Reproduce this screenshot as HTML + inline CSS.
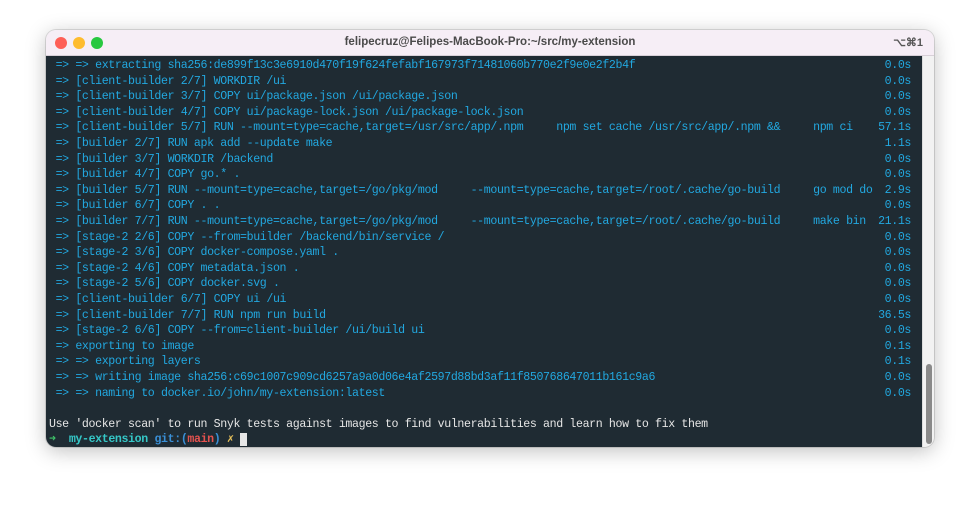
<!DOCTYPE html>
<html><head><meta charset="utf-8"><style>
body{margin:0;width:980px;height:509px;background:#fff;overflow:hidden;position:relative;font-family:"Liberation Sans",sans-serif}
.win{position:absolute;left:46px;top:30px;width:888px;height:417px;border-radius:10px;overflow:hidden;box-shadow:0 4px 20px rgba(0,0,0,.25),0 0 0 1px rgba(0,0,0,.12);background:#f3f3f3}
.tb{height:25px;background:#f6eef6;border-bottom:1px solid #d8d0d8;position:relative}
.d{position:absolute;top:7px;width:12px;height:12px;border-radius:50%}
.title{position:absolute;left:0;right:0;top:6px;text-align:center;font-size:11.5px;font-weight:bold;color:#4a4a4a}
.kb{position:absolute;right:11px;top:6px;font-size:11px;font-weight:bold;color:#555}
.term{position:absolute;left:0;top:26px;width:876px;height:391px;background:#1f2b33;font-family:"Liberation Mono",monospace;font-size:11.6px;letter-spacing:-0.37px;color:#22a8e0;white-space:pre}
.l{position:absolute;left:3px;height:15.6px;line-height:15.6px;width:862px;margin-top:2px}
.t{position:absolute;right:0;top:0}
.sb{position:absolute;left:876px;top:26px;width:12px;height:391px;background:#f2f2f2;border-left:1px solid #ddd}
.th{position:absolute;left:3px;top:308px;width:6px;height:80px;border-radius:3px;background:#8a8a8a}
</style></head><body>
<div class="win">
<div class="tb">
<div class="d" style="left:9px;background:#fe5f57"></div>
<div class="d" style="left:27px;background:#febc2e"></div>
<div class="d" style="left:45px;background:#28c840"></div>
<div class="title">felipecruz@Felipes-MacBook-Pro:~/src/my-extension</div>
<div class="kb">⌥⌘1</div>
</div>
<div class="term">
<div class="l" style="top:0px"> =&gt; =&gt; extracting sha256:de899f13c3e6910d470f19f624fefabf167973f71481060b770e2f9e0e2f2b4f<span class="t">0.0s</span></div>
<div class="l" style="top:15.6px"> =&gt; [client-builder 2/7] WORKDIR /ui<span class="t">0.0s</span></div>
<div class="l" style="top:31.2px"> =&gt; [client-builder 3/7] COPY ui/package.json /ui/package.json<span class="t">0.0s</span></div>
<div class="l" style="top:46.8px"> =&gt; [client-builder 4/7] COPY ui/package-lock.json /ui/package-lock.json<span class="t">0.0s</span></div>
<div class="l" style="top:62.4px"> =&gt; [client-builder 5/7] RUN --mount=type=cache,target=/usr/src/app/.npm     npm set cache /usr/src/app/.npm &amp;&amp;     npm ci<span class="t">57.1s</span></div>
<div class="l" style="top:78px"> =&gt; [builder 2/7] RUN apk add --update make<span class="t">1.1s</span></div>
<div class="l" style="top:93.6px"> =&gt; [builder 3/7] WORKDIR /backend<span class="t">0.0s</span></div>
<div class="l" style="top:109.2px"> =&gt; [builder 4/7] COPY go.* .<span class="t">0.0s</span></div>
<div class="l" style="top:124.8px"> =&gt; [builder 5/7] RUN --mount=type=cache,target=/go/pkg/mod     --mount=type=cache,target=/root/.cache/go-build     go mod do<span class="t">2.9s</span></div>
<div class="l" style="top:140.4px"> =&gt; [builder 6/7] COPY . .<span class="t">0.0s</span></div>
<div class="l" style="top:156px"> =&gt; [builder 7/7] RUN --mount=type=cache,target=/go/pkg/mod     --mount=type=cache,target=/root/.cache/go-build     make bin<span class="t">21.1s</span></div>
<div class="l" style="top:171.6px"> =&gt; [stage-2 2/6] COPY --from=builder /backend/bin/service /<span class="t">0.0s</span></div>
<div class="l" style="top:187.2px"> =&gt; [stage-2 3/6] COPY docker-compose.yaml .<span class="t">0.0s</span></div>
<div class="l" style="top:202.8px"> =&gt; [stage-2 4/6] COPY metadata.json .<span class="t">0.0s</span></div>
<div class="l" style="top:218.4px"> =&gt; [stage-2 5/6] COPY docker.svg .<span class="t">0.0s</span></div>
<div class="l" style="top:234px"> =&gt; [client-builder 6/7] COPY ui /ui<span class="t">0.0s</span></div>
<div class="l" style="top:249.6px"> =&gt; [client-builder 7/7] RUN npm run build<span class="t">36.5s</span></div>
<div class="l" style="top:265.2px"> =&gt; [stage-2 6/6] COPY --from=client-builder /ui/build ui<span class="t">0.0s</span></div>
<div class="l" style="top:280.8px"> =&gt; exporting to image<span class="t">0.1s</span></div>
<div class="l" style="top:296.4px"> =&gt; =&gt; exporting layers<span class="t">0.1s</span></div>
<div class="l" style="top:312px"> =&gt; =&gt; writing image sha256:c69c1007c909cd6257a9a0d06e4af2597d88bd3af11f850768647011b161c9a6<span class="t">0.0s</span></div>
<div class="l" style="top:327.6px"> =&gt; =&gt; naming to docker.io/john/my-extension:latest<span class="t">0.0s</span></div>
<div class="l" style="top:358.8px;color:#e6e6e6">Use 'docker scan' to run Snyk tests against images to find vulnerabilities and learn how to fix them</div>
<div class="l" style="top:374.4px;font-weight:bold"><span style="color:#3fc56a">➜</span>  <span style="color:#35c7c7">my-extension</span> <span style="color:#3a8fd6">git:(</span><span style="color:#e5524f">main</span><span style="color:#3a8fd6">)</span> <span style="color:#e8c25a">✗</span> <span style="background:#e6e6e6"> </span></div>
</div>
<div class="sb"><div class="th"></div></div>
</div>
</body></html>
